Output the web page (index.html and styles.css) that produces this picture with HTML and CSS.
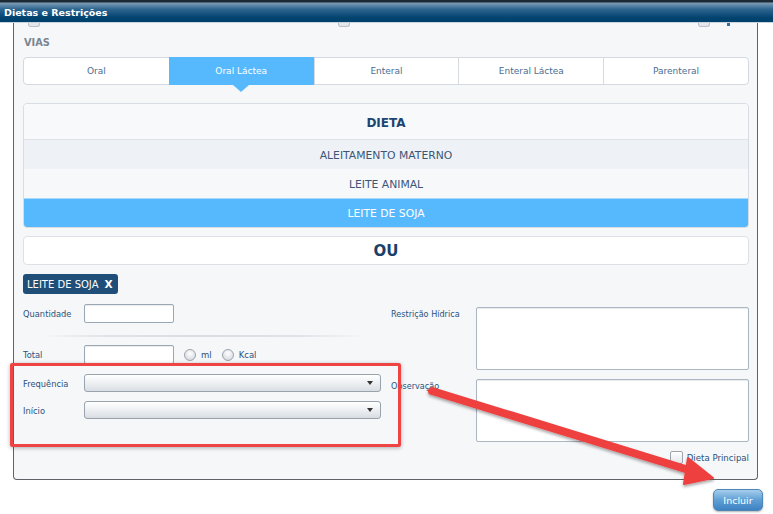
FILE: index.html
```html
<!DOCTYPE html>
<html lang="pt-BR">
<head>
    <meta charset="UTF-8">
    <meta name="viewport" content="width=device-width, initial-scale=1.0">
    <title>Dietas e Restrições</title>
    <link rel="stylesheet" href="styles.css">
</head>
<body>
    <header class="titlebar">Dietas e Restrições</header>

    <main class="panel">
        <div class="stubs">
            <span class="stub"></span>
            <span class="stub"></span>
            <span class="stub"><i class="stub-mark"></i></span>
        </div>

        <h3 class="vias">VIAS</h3>
        <nav class="tabs">
            <a class="tab">Oral</a>
            <a class="tab active">Oral Láctea</a>
            <a class="tab">Enteral</a>
            <a class="tab">Enteral Láctea</a>
            <a class="tab">Parenteral</a>
        </nav>

        <section class="dieta">
            <div class="dieta-head">DIETA</div>
            <div class="dieta-row alt">ALEITAMENTO MATERNO</div>
            <div class="dieta-row">LEITE ANIMAL</div>
            <div class="dieta-row selected">LEITE DE SOJA</div>
        </section>

        <div class="ou">OU</div>

        <div class="tags">
            <span class="tag">LEITE DE SOJA <b>X</b></span>
        </div>

        <form class="form">
            <div class="col-left">
                <div class="field">
                    <label for="quantidade">Quantidade</label>
                    <input type="text" id="quantidade" class="txt">
                </div>
                <div class="sep"></div>
                <div class="field">
                    <label for="total">Total</label>
                    <input type="text" id="total" class="txt">
                    <span class="radio"></span><span class="radio-label">ml</span>
                    <span class="radio"></span><span class="radio-label">Kcal</span>
                </div>
                <div class="field sel-row">
                    <label>Frequência</label>
                    <div class="select"><span class="caret"></span></div>
                </div>
                <div class="field sel-row second">
                    <label>Início</label>
                    <div class="select"><span class="caret"></span></div>
                </div>
            </div>

            <div class="col-right">
                <div class="area-row">
                    <label>Restrição Hídrica</label>
                    <div class="area"></div>
                </div>
                <div class="area-row">
                    <label>Observação</label>
                    <div class="area"></div>
                </div>
                <div class="check-row">
                    <span class="check"></span>
                    <span>Dieta Principal</span>
                </div>
            </div>
        </form>
    </main>

    <div class="actions">
        <button class="btn">Incluir</button>
    </div>

    <div class="highlight"></div>
    <svg class="arrow" width="773" height="514" viewBox="0 0 773 514">
        <defs>
            <filter id="sh" x="-10%" y="-10%" width="120%" height="130%">
                <feDropShadow dx="0" dy="2" stdDeviation="1.5" flood-color="#000" flood-opacity="0.35"/>
            </filter>
        </defs>
        <g filter="url(#sh)" fill="#ef4040" stroke="#ef4040">
            <line x1="432" y1="391" x2="692" y2="471" stroke-width="8" stroke-linecap="round"/>
            <polygon points="713,478 688,458 684,484" stroke-width="2" stroke-linejoin="round"/>
        </g>
    </svg>
</body>
</html>
```

FILE: styles.css
```css
* {
    box-sizing: border-box;
}

body {
    margin: 0;
    width: 773px;
    height: 514px;
    overflow: hidden;
    position: relative;
    background: #fff;
    font-family: "DejaVu Sans", Verdana, sans-serif;
    color: #2a527c;
}

.titlebar {
    height: 23px;
    padding: 3px 0 0 4px;
    display: flex;
    align-items: center;
    font-size: 9.5px;
    font-weight: bold;
    color: #fff;
    background: linear-gradient(#1d2a35 0, #1d2a35 2px, #7d9db7 3px, #2f6690 9px, #00426e 18px, #00426e 22px);
    border-bottom: 1px solid #c8d3dd;
}

.panel {
    margin: 0 15px 0 13px;
    height: 457px;
    background: #f5f7f9;
    border: 1px solid #5f6368;
    border-top: none;
    border-radius: 0 0 4px 4px;
    padding: 0 8px 0 9px;
}

.stubs {
    display: grid;
    grid-template-columns: 310px 360px auto;
    padding-left: 5px;
    height: 5px;
}

.stub {
    width: 12px;
    height: 4px;
    border: 1px solid #b9c0c8;
    border-top: none;
    border-radius: 0 0 3px 3px;
    background: #e4e8ec;
    position: relative;
}

.stub-mark {
    position: absolute;
    left: 28px;
    top: 0;
    width: 3px;
    height: 3px;
    background: #2f6fa8;
}

.vias {
    margin: 8px 0 7px 1px;
    line-height: 14px;
    font-size: 9.8px;
    font-weight: bold;
    color: #7b8590;
}

.tabs {
    display: grid;
    grid-template-columns: repeat(5, 1fr);
    height: 28px;
    background: #fff;
    border: 1px solid #d3d9df;
    border-radius: 4px;
}

.tab {
    display: flex;
    align-items: center;
    justify-content: center;
    font-size: 9px;
    color: #4a6d92;
    border-left: 1px solid #d6dbe0;
    position: relative;
}

.tab:first-child {
    border-left: none;
}

.tab.active {
    background: #56b9fd;
    color: #fff;
    margin: -1px 0;
    border-left: none;
}

.tab.active::after {
    content: "";
    position: absolute;
    left: 50%;
    bottom: -7px;
    margin-left: -8px;
    border-left: 8px solid transparent;
    border-right: 8px solid transparent;
    border-top: 7px solid #56b9fd;
}

.dieta {
    margin-top: 18px;
    border: 1px solid #d8dde3;
    border-radius: 4px;
    overflow: hidden;
    background: #f7f8fa;
}

.dieta-head {
    height: 36px;
    padding-top: 3px;
    display: flex;
    align-items: center;
    justify-content: center;
    font-size: 12px;
    font-weight: bold;
    color: #1d4570;
    background: #f8f9fb;
    border-bottom: 1px solid #dfe3e8;
}

.dieta-row {
    height: 29px;
    padding-top: 1px;
    display: flex;
    align-items: center;
    justify-content: center;
    font-size: 10.8px;
    color: #3d5678;
}

.dieta-row.alt {
    background: #eef1f6;
}

.dieta-row.selected {
    background: #56b9fd;
    color: #fff;
    border-top: 1px solid #a9d9fb;
}

.ou {
    margin-top: 8px;
    height: 29px;
    padding-top: 1px;
    display: flex;
    align-items: center;
    justify-content: center;
    background: #fff;
    border: 1px solid #dde1e6;
    border-radius: 4px;
    font-size: 15px;
    font-weight: bold;
    color: #1a3f6a;
}

.tags {
    margin-top: 9px;
    display: flex;
}

.tag {
    height: 20px;
    padding: 0 5px 0 4px;
    display: flex;
    align-items: center;
    gap: 6px;
    background: #1f4f79;
    border-radius: 3px;
    color: #fff;
    font-size: 10px;
}

.tag b {
    font-size: 10.5px;
}

.form {
    margin-top: 10px;
    display: grid;
    grid-template-columns: 358px 359px;
    gap: 9px;
}

.field {
    display: flex;
    align-items: center;
    height: 19px;
    font-size: 8.3px;
}

.field label {
    width: 61px;
    padding-top: 1px;
    color: #2a527c;
}

.txt {
    width: 90px;
    height: 19px;
    border: 1px solid #9aa8b6;
    border-radius: 2px;
    background: #fff;
    box-shadow: inset 0 1px 1px rgba(0, 0, 0, 0.08);
}

.sep {
    margin: 12px 0 8px 17px;
    width: 325px;
    height: 2px;
    background: linear-gradient(90deg, transparent, #e0e3e8 20%, #d9dde2 50%, #e0e3e8 80%, transparent);
}

.radio {
    width: 12px;
    height: 12px;
    margin-left: 10px;
    border: 1px solid #9ba4ad;
    border-radius: 50%;
    background: radial-gradient(circle at 50% 35%, #ffffff, #d7dbe0 80%);
}

.radio + .radio-label {
    margin-left: 5px;
    font-size: 8.5px;
}

.sel-row {
    margin-top: 10px;
    height: 18px;
}

.sel-row.second {
    margin-top: 9px;
}

.select {
    width: 297px;
    height: 18px;
    border: 1px solid #98a3ae;
    border-radius: 3px;
    background: linear-gradient(#ffffff, #e9ecef 60%, #d9dde2);
    display: flex;
    align-items: center;
    justify-content: flex-end;
    padding-right: 7px;
}

.caret {
    border-left: 3px solid transparent;
    border-right: 3px solid transparent;
    border-top: 4px solid #333;
}

.col-right {
    padding-top: 3px;
}

.area-row {
    display: flex;
    font-size: 8.1px;
    color: #2a527c;
    margin-bottom: 9px;
}

.area-row label {
    width: 86px;
    padding: 2px 0 0 1px;
}

.area {
    width: 273px;
    height: 63px;
    background: #fff;
    border: 1px solid #a9b6c3;
    border-radius: 2px;
    box-shadow: inset 0 1px 1px rgba(0, 0, 0, 0.08);
}

.check-row {
    margin-top: 1px;
    display: flex;
    align-items: center;
    justify-content: flex-end;
    gap: 4px;
    font-size: 8.6px;
    color: #2a527c;
}

.check {
    width: 13px;
    height: 13px;
    border: 1px solid #9ba4ad;
    border-radius: 2px;
    background: linear-gradient(#fff, #e3e6ea);
}

.actions {
    display: flex;
    justify-content: flex-end;
    padding: 9px 10px 0 0;
}

.btn {
    width: 50px;
    height: 22px;
    border: 1px solid #4f86b8;
    border-radius: 5px;
    background: linear-gradient(#a6cdec, #5f9fd6 50%, #3d82c2);
    color: #fff;
    font-family: "DejaVu Sans", Verdana, sans-serif;
    font-size: 9.5px;
    box-shadow: 0 1px 2px rgba(0, 0, 0, 0.3);
}

.highlight {
    position: absolute;
    left: 10px;
    top: 363px;
    width: 391px;
    height: 84px;
    border: 3px solid #ee4444;
    border-radius: 2px;
    box-shadow: 0 1px 4px rgba(0, 0, 0, 0.3);
}

.arrow {
    position: absolute;
    left: 0;
    top: 0;
    pointer-events: none;
}
```
